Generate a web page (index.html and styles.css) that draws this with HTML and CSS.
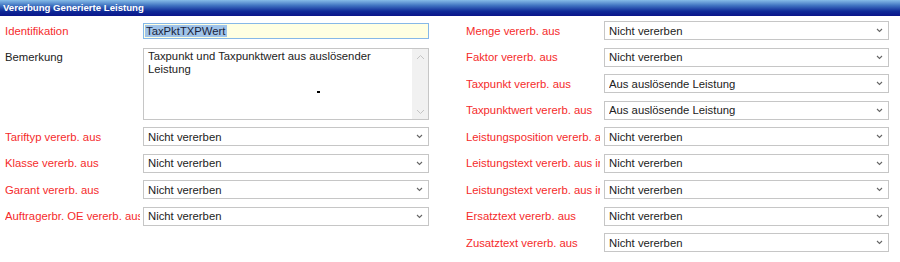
FILE: index.html
```html
<!DOCTYPE html>
<html lang="de">
  <head>
    <meta charset="UTF-8" />
    <title>Vererbung Generierte Leistung</title>
    <link rel="stylesheet" href="styles.css">
  </head>
  <body>
    <div class="panel">
      <div class="panel-title">Vererbung Generierte Leistung</div>

      <div class="form-grid">
        <label class="lbl req">Identifikation</label>
        <div class="field field-id"><span class="sel">TaxPktTXPWert</span></div>
        <label class="lbl req right">Menge vererb. aus</label>
        <select class="dd"><option>Nicht vererben</option></select>

        <label class="lbl">Bemerkung</label>
        <div class="memo">
          <textarea class="memo-text">Taxpunkt und Taxpunktwert aus auslösender Leistung</textarea>
          <div class="memo-bar">
            <svg width="9" height="6" viewBox="0 0 9 6"><path d="M1 5 L4.5 1.5 L8 5" fill="none" stroke="#c4c4c4" stroke-width="1"/></svg>
            <svg width="9" height="6" viewBox="0 0 9 6"><path d="M1 1 L4.5 4.5 L8 1" fill="none" stroke="#c4c4c4" stroke-width="1"/></svg>
          </div>
          <span class="cursor-mark"></span>
        </div>
        <label class="lbl req right">Faktor vererb. aus</label>
        <select class="dd"><option>Nicht vererben</option></select>

        <label class="lbl req right">Taxpunkt vererb. aus</label>
        <select class="dd"><option>Aus auslösende Leistung</option></select>

        <label class="lbl req right">Taxpunktwert vererb. aus</label>
        <select class="dd"><option>Aus auslösende Leistung</option></select>

        <label class="lbl req">Tariftyp vererb. aus</label>
        <select class="dd"><option>Nicht vererben</option></select>
        <label class="lbl req right">Leistungsposition vererb. aus</label>
        <select class="dd"><option>Nicht vererben</option></select>

        <label class="lbl req">Klasse vererb. aus</label>
        <select class="dd"><option>Nicht vererben</option></select>
        <label class="lbl req right">Leistungstext vererb. aus interner</label>
        <select class="dd"><option>Nicht vererben</option></select>

        <label class="lbl req">Garant vererb. aus</label>
        <select class="dd"><option>Nicht vererben</option></select>
        <label class="lbl req right">Leistungstext vererb. aus interner</label>
        <select class="dd"><option>Nicht vererben</option></select>

        <label class="lbl req">Auftragerbr. OE vererb. aus</label>
        <select class="dd"><option>Nicht vererben</option></select>
        <label class="lbl req right">Ersatztext vererb. aus</label>
        <select class="dd"><option>Nicht vererben</option></select>

        <label class="lbl req right">Zusatztext vererb. aus</label>
        <select class="dd"><option>Nicht vererben</option></select>
      </div>
    </div>
  </body>
</html>
```

FILE: styles.css
```css
body {
  margin: 0;
  background: #fff;
  font-family: "Liberation Sans", Arial, sans-serif;
  font-size: 11.3px;
  color: #222;
}
.panel-title {
  height: 16px;
  line-height: 16px;
  padding-left: 3px;
  color: #fff;
  font-weight: bold;
  font-size: 9.6px;
  background: linear-gradient(#86bce8 0%, #3f72c0 35%, #0f2a98 70%, #0a158a 100%);
}
.form-grid {
  display: grid;
  grid-template-columns: 138px 286px 175px 285px;
  grid-auto-rows: 19px;
  row-gap: 7.5px;
  padding: 5px 0 0 5px;
  align-items: center;
}
.lbl {
  grid-column: 1;
  white-space: nowrap;
  overflow: hidden;
  margin-right: 3px;
  color: #222;
}
.lbl.right {
  grid-column: 3;
  margin-left: 37px;
  margin-right: 4px;
}
.req {
  color: #f52b2b;
}
.field-id {
  height: 14px;
  line-height: 14px;
  padding-left: 1px;
  border: 1px solid #86b8e8;
  background: #ffffe2;
  color: #1b1f3a;
}
.field-id .sel {
  background: #9fc3e9;
  padding: 0 1px;
}
.dd {
  appearance: none;
  -webkit-appearance: none;
  height: 19px;
  margin: 0;
  padding: 0 0 0 4px;
  border: 1px solid #c6c6c6;
  border-radius: 0;
  background: #fff url("data:image/svg+xml,%3Csvg xmlns='http://www.w3.org/2000/svg' width='7' height='5' viewBox='0 0 7 5'%3E%3Cpath d='M1 1 L3.5 3.5 L6 1' fill='none' stroke='%23666' stroke-width='1.1'/%3E%3C/svg%3E") no-repeat right 5px center;
  font-family: inherit;
  font-size: 11.3px;
  color: #222;
}
.memo {
  grid-column: 2;
  grid-row: 2 / span 3;
  align-self: stretch;
  position: relative;
  display: flex;
  border: 1px solid #c6c6c6;
}
.memo-text {
  flex: 1;
  margin: 0;
  padding: 1px 4px;
  border: 0;
  resize: none;
  overflow: hidden;
  font-family: inherit;
  font-size: 11.3px;
  line-height: 13px;
  color: #222;
}
.memo-bar {
  width: 16px;
  background: #f1f1f1;
  display: flex;
  flex-direction: column;
  justify-content: space-between;
  align-items: center;
  padding: 5px 0 4px;
}
.cursor-mark {
  position: absolute;
  left: 173px;
  top: 42px;
  width: 3px;
  height: 2px;
  background: #000;
}
```
